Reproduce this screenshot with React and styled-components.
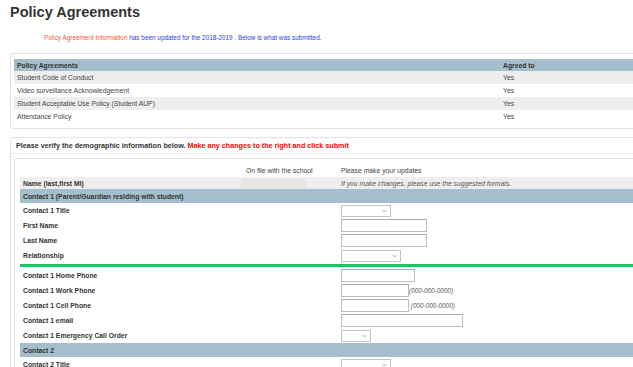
import React from 'react';
import styled, { createGlobalStyle } from 'styled-components';

/* ─── Data ──────────────────────────────────────────────────────────── */

const POLICIES = [
  'Student Code of Conduct',
  'Video surveillance Acknowledgement',
  'Student Acceptable Use Policy (Student AUP)',
  'Attendance Policy',
];

const CONTACT1 = [
  { label: 'Contact 1 Title', kind: 'select', width: 50 },
  { label: 'First Name', kind: 'input', width: 86 },
  { label: 'Last Name', kind: 'input', width: 86 },
  { label: 'Relationship', kind: 'select', width: 60 },
  { divider: true },
  { label: 'Contact 1 Home Phone', kind: 'input', width: 74 },
  { label: 'Contact 1 Work Phone', kind: 'input', width: 68, hint: '(000-000-0000)' },
  { label: 'Contact 1 Cell Phone', kind: 'input', width: 68, hint: ' (000-000-0000)' },
  { label: 'Contact 1 email', kind: 'input', width: 122 },
  { label: 'Contact 1 Emergency Call Order', kind: 'select', width: 30 },
];

const CONTACT2 = [{ label: 'Contact 2 Title', kind: 'select', width: 50 }];

/* ─── Styled components ──────────────────────────────────────────────── */

const GlobalStyle = createGlobalStyle`
  html, body {
    margin: 0;
    padding: 0;
    background: #fff;
    overflow: hidden;
  }
  body {
    font-family: "Liberation Sans", Arial, sans-serif;
    color: #333;
  }
`;

const Page = styled.div`
  width: 760px;
  padding: 4px 0 0 10px;
`;

const Title = styled.h1`
  margin: 0;
  font-size: 14.5px;
  line-height: 17px;
  font-weight: 700;
  color: #333;
`;

const Info = styled.p`
  margin: 12px 0 0;
  padding-left: 34px;
  font-size: 6.4px;
  line-height: 10px;
  color: #2b3fd6;
`;

const Orange = styled.span`
  color: #f45a2e;
`;

const Panel = styled.div`
  margin-top: ${p => p.$top}px;
  border: 1px solid #e2e2e2;
  border-radius: 3px;
  padding: ${p => p.$pad};
`;

const Row = styled.div`
  display: grid;
  grid-template-columns: ${p => p.$cols};
  align-items: center;
  height: ${p => p.$h}px;
  background: ${p => p.$bg || 'transparent'};
  font-size: 6.8px;
  font-weight: ${p => (p.$bold ? 700 : 400)};
  color: ${p => (p.$bold ? '#333' : '#444')};
`;

const Cell = styled.div`
  padding-left: ${p => p.$pl ?? 3}px;
  white-space: nowrap;
  display: flex;
  align-items: center;
  font-style: ${p => (p.$italic ? 'italic' : 'normal')};
  font-weight: ${p => (p.$italic ? 400 : 'inherit')};
  color: ${p => (p.$italic ? '#555' : 'inherit')};
`;

const VerifyHead = styled.div`
  height: 15px;
  display: flex;
  align-items: center;
  padding-left: 5px;
  border-bottom: 1px solid #eee;
  font-size: 7.2px;
  font-weight: 700;
  color: #333;
`;

const Red = styled.span`
  color: #f00;
  margin-left: 2px;
`;

const Inner = styled.div`
  margin: 4px 0 0 3px;
  border: 1px solid #e2e2e2;
  border-radius: 3px;
  padding: 5px 0 0 5px;
`;

const OnFileBox = styled.div`
  width: 65px;
  height: 9px;
  background: #e9e5e5;
`;

const TextInput = styled.div`
  box-sizing: border-box;
  width: ${p => p.$w}px;
  height: 13px;
  border: 1px solid #bdbdbd;
  border-top-color: #a9a9a9;
  background: #fff;
`;

const SelectBox = styled.div`
  box-sizing: border-box;
  width: ${p => p.$w}px;
  height: 12px;
  border: 1px solid #c4c4c4;
  background: #fff;
  display: flex;
  align-items: center;
  justify-content: flex-end;
  padding-right: 3px;
`;

const Hint = styled.span`
  font-style: italic;
  font-weight: 400;
  font-size: 6.4px;
  color: #555;
  white-space: pre;
`;

const GreenRule = styled.div`
  height: 3px;
  margin: 1px 0;
  background: #14c964;
`;

/* ─── Component ─────────────────────────────────────────────────────── */

const FORM_COLS = '218px 100px 1fr';
const HEAD_BG = '#a4bfcb';

const Chevron = () => (
  <svg width="5" height="4" viewBox="0 0 5 4">
    <path d="M0.5 1 L2.5 3 L4.5 1" fill="none" stroke="#999" strokeWidth="0.8" />
  </svg>
);

const Field = ({ f }) => (
  <Row $cols={FORM_COLS} $h={15} $bold>
    <Cell>{f.label}</Cell>
    <Cell />
    <Cell $pl={3}>
      {f.kind === 'select' ? (
        <SelectBox $w={f.width}><Chevron /></SelectBox>
      ) : (
        <TextInput $w={f.width} />
      )}
      {f.hint && <Hint>{f.hint}</Hint>}
    </Cell>
  </Row>
);

const App = () => (
  <>
    <GlobalStyle />
    <Page>
      <Title>Policy Agreements</Title>
      <Info>
        <Orange>Policy Agreement Information</Orange> has been updated for the 2018-2019 . Below is what was submitted.
      </Info>

      <Panel $top={10} $pad="5px 0 5px 3px">
        <Row $cols="486px 1fr" $h={12} $bg={HEAD_BG} $bold>
          <Cell>Policy Agreements</Cell>
          <Cell>Agreed to</Cell>
        </Row>
        {POLICIES.map((p, i) => (
          <Row key={p} $cols="486px 1fr" $h={13} $bg={i % 2 === 0 ? '#eee' : '#fff'}>
            <Cell>{p}</Cell>
            <Cell>Yes</Cell>
          </Row>
        ))}
      </Panel>

      <Panel $top={8} $pad="0">
        <VerifyHead>
          Please verify the demographic information below.<Red>Make any changes to the right and click submit</Red>
        </VerifyHead>
        <Inner>
          <Row $cols={FORM_COLS} $h={13}>
            <Cell />
            <Cell $pl={8}>On file with the school</Cell>
            <Cell>Please make your updates</Cell>
          </Row>
          <Row $cols={FORM_COLS} $h={12} $bg="#eee" $bold>
            <Cell>Name (last,first MI)</Cell>
            <Cell><OnFileBox /></Cell>
            <Cell $italic>If you make changes, please use the suggested formats.</Cell>
          </Row>
          <Row $cols="1fr" $h={14} $bg={HEAD_BG} $bold>
            <Cell>Contact 1 (Parent/Guardian residing with student)</Cell>
          </Row>
          {CONTACT1.map((f, i) => (f.divider ? <GreenRule key={i} /> : <Field key={f.label} f={f} />))}
          <Row $cols="1fr" $h={14} $bg={HEAD_BG} $bold>
            <Cell>Contact 2</Cell>
          </Row>
          {CONTACT2.map(f => <Field key={f.label} f={f} />)}
        </Inner>
      </Panel>
    </Page>
  </>
);

export default App;
